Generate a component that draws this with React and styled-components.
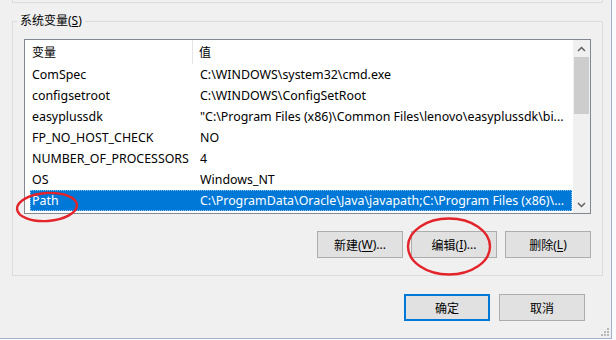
import React from 'react';
import styled, { createGlobalStyle } from 'styled-components';

const Global = createGlobalStyle`
  html, body { margin: 0; padding: 0; background: #ffffff; }
  body {
    width: 616px; height: 340px; overflow: hidden;
    font-family: "Noto Sans", "Noto Sans CJK SC", sans-serif;
    font-size: 13px; color: #000;
  }
`;

const Screen = styled.div`
  position: relative;
  width: 616px;
  height: 340px;
  overflow: hidden;
  background: #fafbfd;
`;

const Window = styled.div`
  position: relative;
  width: 611px;
  height: 338px;
  background: #f0f0f0;
  border-right: 1px solid #a7b1cf;
  border-bottom: 1px solid #a7b1cf;
  display: flex;
  flex-direction: column;
`;

const PrevGroup = styled.div`
  margin-left: 12px;
  width: 589px;
  height: 2px;
  border: 1px solid #dcdcdc;
  border-top: none;
`;

const GroupBox = styled.fieldset`
  margin: 10px 0 0 12px;
  box-sizing: border-box;
  width: 591px;
  min-inline-size: 0;
  padding: 10px 11px 17px 11px;
  border: 1px solid #dcdcdc;
  border-radius: 0;
`;

const Legend = styled.legend`
  margin-left: -7px;
  padding: 0 3px;
  line-height: 16px;
  font-size: 12px;
`;

const ListView = styled.div`
  height: 173px;
  border: 1px solid #828790;
  background: #ffffff;
  display: flex;
`;

const ListBody = styled.div`
  flex: 1;
  display: flex;
  flex-direction: column;
  min-width: 0;
`;

const Header = styled.div`
  display: flex;
  height: 24px;
  flex: none;
`;

const HeaderCell = styled.div`
  display: flex;
  align-items: center;
  font-size: 12px;
  box-sizing: border-box;
  ${(p) => (p.$first ? 'width: 168px; padding-left: 7px; border-right: 1px solid #e5e5e5;' : 'flex: 1; padding-left: 6px;')}
`;

const Row = styled.div`
  display: flex;
  align-items: center;
  height: 21px;
  margin: 0 1px 0 5px;
  box-sizing: border-box;
  white-space: nowrap;
  font-size: 12.4px;
  background: ${(p) => (p.$selected ? '#0078d7' : 'transparent')};
  color: ${(p) => (p.$selected ? '#ffffff' : '#000000')};
  outline: ${(p) => (p.$selected ? '1px dotted rgba(255,255,255,0.55)' : 'none')};
  outline-offset: -1px;
`;

const Cell = styled.div`
  box-sizing: border-box;
  padding-left: 2px;
  overflow: hidden;
  ${(p) => (p.$first ? 'width: 168px; flex: none;' : 'flex: 1; min-width: 0;')}
`;

const ScrollBar = styled.div`
  width: 17px;
  flex: none;
  background: #f0f0f0;
  display: flex;
  flex-direction: column;
`;

const ScrollArrow = styled.div`
  height: 17px;
  flex: none;
  display: flex;
  align-items: center;
  justify-content: center;
`;

const Track = styled.div`
  flex: 1;
  display: flex;
  flex-direction: column;
`;

const Thumb = styled.div`
  height: 57px;
  margin: 0 1px;
  background: #cdcdcd;
`;

const ButtonRow = styled.div`
  display: flex;
  justify-content: flex-end;
  gap: ${(p) => p.$gap}px;
  margin-top: ${(p) => p.$top}px;
  padding-right: ${(p) => p.$right || 0}px;
`;

const Button = styled.div`
  width: 86px;
  height: 27px;
  box-sizing: border-box;
  display: flex;
  align-items: center;
  justify-content: center;
  background: #e1e1e1;
  border: ${(p) => (p.$default ? '2px solid #0078d7' : '1px solid #adadad')};
  font-size: 12px;
  white-space: nowrap;
  u { text-decoration: underline; text-underline-offset: 2px; }
`;

const Grip = styled.svg`
  position: absolute;
  right: 2px;
  bottom: 2px;
`;

const Annotations = styled.svg`
  position: absolute;
  left: 0;
  top: 0;
  pointer-events: none;
`;

const rows = [
  ['ComSpec', 'C:\\WINDOWS\\system32\\cmd.exe'],
  ['configsetroot', 'C:\\WINDOWS\\ConfigSetRoot'],
  ['easyplussdk', '"C:\\Program Files (x86)\\Common Files\\lenovo\\easyplussdk\\bi...'],
  ['FP_NO_HOST_CHECK', 'NO'],
  ['NUMBER_OF_PROCESSORS', '4'],
  ['OS', 'Windows_NT'],
  ['Path', 'C:\\ProgramData\\Oracle\\Java\\javapath;C:\\Program Files (x86)\\...'],
];

const Chevron = ({ up }) => (
  <svg width="9" height="6" viewBox="0 0 9 6">
    <path
      d={up ? 'M1 5 L4.5 1.5 L8 5' : 'M1 1 L4.5 4.5 L8 1'}
      fill="none"
      stroke="#606060"
      strokeWidth="1.5"
    />
  </svg>
);

export default function App() {
  return (
    <Screen>
      <Global />
      <Window>
        <PrevGroup />
        <GroupBox>
          <Legend>
            系统变量(<u>S</u>)
          </Legend>
          <ListView>
            <ListBody>
              <Header>
                <HeaderCell $first>变量</HeaderCell>
                <HeaderCell>值</HeaderCell>
              </Header>
              {rows.map(([k, v]) => (
                <Row key={k} $selected={k === 'Path'}>
                  <Cell $first>{k}</Cell>
                  <Cell>{v}</Cell>
                </Row>
              ))}
            </ListBody>
            <ScrollBar>
              <ScrollArrow>
                <Chevron up />
              </ScrollArrow>
              <Track>
                <Thumb />
              </Track>
              <ScrollArrow>
                <Chevron />
              </ScrollArrow>
            </ScrollBar>
          </ListView>
          <ButtonRow $gap={8} $top={17}>
            <Button>
              新建(<u>W</u>)...
            </Button>
            <Button>
              编辑(<u>I</u>)...
            </Button>
            <Button>
              删除(<u>L</u>)
            </Button>
          </ButtonRow>
        </GroupBox>
        <ButtonRow $gap={9} $top={18} $right={26}>
          <Button $default>确定</Button>
          <Button>取消</Button>
        </ButtonRow>
        <Grip width="8" height="8" viewBox="0 0 8 8">
          <g fill="#b8b8b8">
            <rect x="6" y="0" width="2" height="2" />
            <rect x="3" y="3" width="2" height="2" />
            <rect x="6" y="3" width="2" height="2" />
            <rect x="0" y="6" width="2" height="2" />
            <rect x="3" y="6" width="2" height="2" />
            <rect x="6" y="6" width="2" height="2" />
          </g>
        </Grip>
      </Window>
      <Annotations width="616" height="340" viewBox="0 0 616 340">
        <ellipse cx="47" cy="207" rx="30" ry="14" transform="rotate(-4 47 207)" fill="none" stroke="#e3242b" strokeWidth="2.4" />
        <ellipse cx="449" cy="246.5" rx="41" ry="28" fill="none" stroke="#e3242b" strokeWidth="2.4" />
      </Annotations>
    </Screen>
  );
}
